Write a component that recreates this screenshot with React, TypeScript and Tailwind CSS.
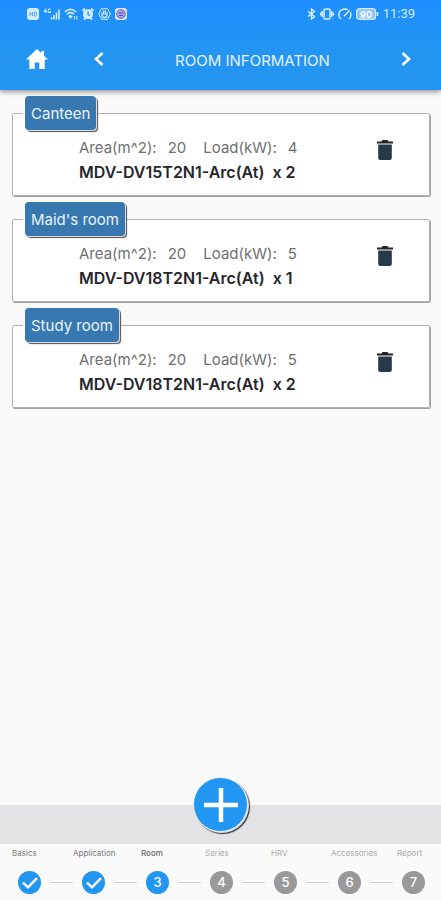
import { Fragment, useState } from "react";
import clsx from "clsx";

type Room = { name: string; area: number; load: number; model: string; qty: number };

const initialRooms: Room[] = [
  { name: "Canteen", area: 20, load: 4, model: "MDV-DV15T2N1-Arc(At)", qty: 2 },
  { name: "Maid's room", area: 20, load: 5, model: "MDV-DV18T2N1-Arc(At)", qty: 1 },
  { name: "Study room", area: 20, load: 5, model: "MDV-DV18T2N1-Arc(At)", qty: 2 },
];

const steps = ["Basics", "Application", "Room", "Series", "HRV", "Accessories", "Report"];
const current = 2;

function StatusBar() {
  return (
    <div className="flex h-7 items-center justify-between pl-[27px] pr-[26px] text-[#d5ebff]">
      <div className="flex items-center gap-1">
        <svg width="12" height="12" viewBox="0 0 12 12">
          <rect width="12" height="12" rx="3" fill="currentColor" />
          <path d="M3 4v4M3 6h2.5M5.500 4v4M7.300 4v4h1q1.500 0 1.500-2t-1.500-2z" stroke="#5aaafa" fill="none" />
        </svg>
        <svg width="17" height="12" viewBox="0 0 17 12" fill="none" stroke="currentColor">
          <path d="M3 0.500L1 3.500h3M3 2v3M7.500 1Q5 0 5 2.800T7.500 4.500V3" />
          <path d="M8.500 9v2.500M11 7v4.500M13.500 4.500v7M16 1.500v10" strokeWidth="1.600" />
        </svg>
        <svg width="14" height="12" viewBox="0 0 14 12" fill="none" stroke="currentColor" strokeWidth="1.500">
          <path d="M0.800 4Q6.500-1.200 12.200 4M2.800 6.300Q6.500 3 10.200 6.300" />
          <path d="M4.500 8.200Q6.500 6.500 8.500 8.200L6.500 10.500z" fill="currentColor" strokeWidth="0.500" />
          <path d="M10.500 8v3.500M12.800 8v3.500" strokeWidth="1" />
        </svg>
        <svg width="12" height="12" viewBox="0 0 12 12">
          <path d="M0.500 3L3 0.500M11.500 3L9 0.500M2 11.500l1.500-2M10 11.500l-1.500-2" stroke="currentColor" strokeWidth="2" />
          <circle cx="6" cy="6.200" r="5" fill="currentColor" />
          <path d="M6 3.500v3l2 1" stroke="#2b8ff5" strokeWidth="1.300" fill="none" />
        </svg>
        <svg width="13" height="12" viewBox="0 0 13 12" fill="none" stroke="currentColor">
          <path d="M3.500 0.700h6L12.400 6l-2.900 5.300h-6L0.600 6z" />
          <path d="M4 4.500v2.500q0 2.500 2.500 2.500T9 7V4.500M5.600 2.500v4M7.400 2.500v4" strokeWidth="1.300" />
        </svg>
        <svg width="12" height="12" viewBox="0 0 12 12">
          <rect width="12" height="12" rx="3" fill="#e2e4ff" />
          <circle cx="6" cy="6" r="4.300" fill="#b2a2ea" stroke="#5a63cf" />
          <path d="M3.500 5h5M4 7.500h4" stroke="#5149ad" strokeWidth="1.200" />
        </svg>
      </div>
      <div className="flex items-center gap-1">
        <svg width="9" height="12" viewBox="0 0 9 12" fill="none" stroke="currentColor" strokeWidth="1.400">
          <path d="M1 3.500L7.500 8.500L4.500 11V1L7.500 3.500L1 8.500" />
        </svg>
        <svg width="14" height="12" viewBox="0 0 14 12" fill="none" stroke="currentColor" strokeWidth="1.500">
          <rect x="4" y="1" width="6" height="10" rx="1" />
          <path d="M2.200 3v6M0.600 4.500v3M11.800 3v6M13.400 4.500v3" />
        </svg>
        <svg width="14" height="12" viewBox="0 0 14 12" fill="none" stroke="currentColor" strokeWidth="1.500">
          <path d="M3 11Q0.800 9.300 0.800 6.500Q1.200 1.200 7 0.900Q8.500 0.900 9.800 1.600M12.300 4Q14 8 11 11M6 8.200L11.500 2.500" />
        </svg>
        <svg width="23" height="12" viewBox="0 0 23 12">
          <rect x="0.600" y="0.600" width="19" height="10.800" rx="3" fill="#8dc4fb" stroke="currentColor" strokeWidth="1.200" />
          <path d="M21.500 4v4" stroke="currentColor" strokeWidth="1.600" />
          <text x="10" y="9.500" textAnchor="middle" fontSize="9" fontWeight="700" fill="#ffffff">
            90
          </text>
        </svg>
        <span className="font-['Roboto',sans-serif] text-[13px] leading-4">11:39</span>
      </div>
    </div>
  );
}

function Chevron({ d }: { d: string }) {
  return (
    <svg width="10" height="14" viewBox="0 0 10 14" fill="none" stroke="#fff" strokeWidth="2.600">
      <path d={d} />
    </svg>
  );
}

function RoomCard({ room, onDelete }: { room: Room; onDelete: () => void }) {
  return (
    <fieldset className="rounded-[2px] border border-[#b0b0b0] bg-white shadow-[1px_1px_0_#a0a0a0]">
      <legend className="ml-2.5 px-0.5">
        <span className="block rounded-[4px] bg-[#3878b0] px-1.5 pb-1 pt-1.5 text-[15px] leading-6 text-[#eaf3fb] shadow-[1px_1px_0_#d5dbe0,2px_2px_1px_#57504c]">
          {room.name}
        </span>
      </legend>
      <div className="flex justify-between pb-[11px] pl-[66px] pr-[35px] pt-1.5">
        <div className="leading-6">
          <p className="flex gap-[17px] text-[15px]/6 text-[#6f6f6f]">
            <span className="flex gap-[11px]">
              <span>Area(m^2):</span>
              <span>{room.area}</span>
            </span>
            <span className="flex gap-[11px]">
              <span>Load(kW):</span>
              <span>{room.load}</span>
            </span>
          </p>
          <p className="flex gap-2 text-base/6 font-semibold text-[#26262b]">
            <span>{room.model}</span>
            <span>x {room.qty}</span>
          </p>
        </div>
        <button type="button" aria-label={`Delete ${room.name}`} onClick={onDelete} className="self-start pt-[3px]">
          <svg width="18" height="22" viewBox="0 0 18 22">
            <path d="M1 2.500h4.500L6.500 1h5l1 1.500H17V4.400H1z" fill="#242424" />
            <path d="M2.200 5.500h13.600V19q0 2-2 2H4.200q-2 0-2-2z" fill="#26384a" />
          </svg>
        </button>
      </div>
    </fieldset>
  );
}

export default function App() {
  const [rooms, setRooms] = useState(initialRooms);

  const addRoom = () => setRooms([...rooms, { ...initialRooms[0], name: `Room ${rooms.length + 1}` }]);

  return (
    <div className="flex min-h-screen flex-col bg-[#fafafa] font-['Inter','Liberation_Sans',sans-serif]">
      <header className="bg-linear-to-b from-[#1e8fff] to-[#2395f1] to-60% shadow-[0_2px_5px_rgba(0,0,0,0.4)]">
        <StatusBar />
        <div className="flex h-[62px] items-center pl-[26px] pr-[30px]">
          <a href="#home" aria-label="Home">
            <svg width="22" height="20" viewBox="0 0 22 20" fill="#fff">
              <path d="M11 0L0 10.500h3.300V20h5.400v-6.500h4.600V20h5.400v-9.500H22L18 6.700V2h-2.600v2.200z" />
            </svg>
          </a>
          <button type="button" aria-label="Previous" className="ml-[46px]">
            <Chevron d="M8.500 1L2 7l6.500 6" />
          </button>
          <h1 className="flex-1 pt-1 text-center text-[15px] leading-6 text-[#e3f1fe]">
            ROOM INFORMATION
          </h1>
          <button type="button" aria-label="Next">
            <Chevron d="M1.500 1L8 7l-6.500 6" />
          </button>
        </div>
      </header>

      <main className="flex flex-1 flex-col gap-1.5 pb-8 pl-3 pr-[11px] pt-1.5">
        {rooms.map((room) => (
          <RoomCard
            key={room.name}
            room={room}
            onDelete={() => setRooms(rooms.filter((r) => r !== room))}
          />
        ))}
      </main>

      <footer>
        <div className="flex h-[39px] justify-center bg-[#e3e2e4]">
          <button
            type="button"
            aria-label="Add room"
            onClick={addRoom}
            className="-mt-7 flex size-[55px] items-center justify-center rounded-full border border-[#e6f2fb] bg-[#2196f3] shadow-[1px_1px_0_#ddd,2px_2px_1px_#333]"
          >
            <svg width="34" height="34" viewBox="0 0 34 34" stroke="#fff" strokeWidth="4.500">
              <path d="M17 0v34M0 17h34" />
            </svg>
          </button>
        </div>
        <nav aria-label="Steps" className="pb-1.5">
          <div className="grid grid-cols-[61fr_68fr_64fr_66fr_60fr_66fr_44fr] pl-3 pt-[3px] text-[8px] leading-3">
            {steps.map((label, i) => (
              <label
                key={label}
                htmlFor={`step-${i}`}
                className={clsx(
                  i < current && "text-[#777]",
                  i === current && "font-medium text-[#666]",
                  i > current && "text-[#aaa]"
                )}
              >
                {label}
              </label>
            ))}
          </div>
          <div className="flex items-center pl-[18px] pr-4 pt-3">
            {steps.map((label, i) => (
              <Fragment key={label}>
                {i > 0 && <span className="mx-[9px] h-px flex-1 bg-[#cfcfcf]" />}
                <button
                  id={`step-${i}`}
                  type="button"
                  className={clsx(
                    "flex size-[23px] items-center justify-center rounded-full text-[13px] font-medium text-white",
                    i <= current ? "bg-[#2196f3]" : "bg-[#999]"
                  )}
                >
                  {i < current ? (
                    <svg width="16" height="12" viewBox="0 0 16 12" fill="none" stroke="#fff" strokeWidth="2.400">
                      <path d="M1 5.500L6 10.300L15 1.200" />
                    </svg>
                  ) : (
                    i + 1
                  )}
                </button>
              </Fragment>
            ))}
          </div>
        </nav>
      </footer>
    </div>
  );
}
